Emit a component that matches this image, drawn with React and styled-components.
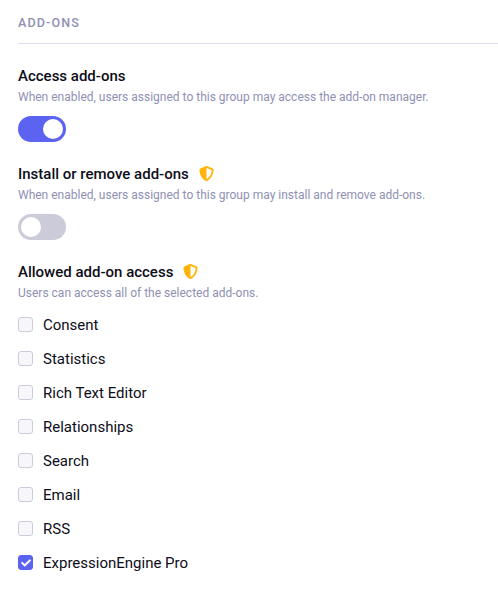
import React, { useState } from "react";
import styled, { createGlobalStyle } from "styled-components";
import { FaShieldAlt, FaCheck } from "react-icons/fa";

const GlobalStyle = createGlobalStyle`
  * { box-sizing: border-box; }
  body { margin: 0; background: #fff; font-family: Roboto, sans-serif; color: #0d0d19; }
`;

const Panel = styled.main`
  height: 602px;
  padding-left: 18px;
  overflow: hidden;
`;

const Heading = styled.h2`
  margin: 0;
  height: 44px;
  padding-top: 15px;
  border-bottom: 1px solid #dfe0ef;
  color: #8f90b4;
  font-size: 12.5px;
  line-height: 16px;
  font-weight: 500;
  letter-spacing: 1.15px;
  text-transform: uppercase;
`;

const Field = styled.section`
  padding-top: 22px;
`;

const Label = styled.h3`
  display: flex;
  align-items: center;
  gap: 10px;
  margin: 0;
  height: 21px;
  font-size: 15px;
  line-height: 21px;
  font-weight: 500;
`;

const Shield = styled(FaShieldAlt)`
  width: 15px;
  height: 15px;
  margin-bottom: 2px;
  color: #ffb40b;
`;

const Hint = styled.p`
  margin: 1px 0 0;
  height: 18px;
  font-size: 12px;
  line-height: 18px;
  color: #8f90b4;
`;

const Toggle = styled.button`
  display: flex;
  align-items: center;
  justify-content: ${(p) => (p.$on ? "flex-end" : "flex-start")};
  width: 48px;
  height: 26px;
  margin-top: 10px;
  padding: 3px;
  border: 0;
  border-radius: 13px;
  background: ${(p) => (p.$on ? "#5d63f1" : "#cbcbda")};
`;

const Knob = styled.span`
  width: 20px;
  height: 20px;
  border-radius: 50%;
  background: #fff;
`;

const Options = styled.div`
  display: grid;
  grid-auto-rows: 24px;
  row-gap: 10px;
  margin-top: 11px;
`;

const Option = styled.label`
  display: flex;
  align-items: center;
  gap: 10px;
  font-size: 15px;
  line-height: 24px;
`;

const Box = styled.button`
  display: grid;
  place-items: center;
  width: 15px;
  height: 15px;
  margin: 0 0 1px;
  padding: 0;
  border: 1px solid ${(p) => (p.$on ? "#5d63f1" : "#cbcbda")};
  border-radius: 3px;
  background: ${(p) => (p.$on ? "#5d63f1" : "#f7f7fb")};
`;

const Tick = styled(FaCheck)`
  width: 10px;
  height: 10px;
  color: #fff;
`;

const names = ["Consent", "Statistics", "Rich Text Editor", "Relationships", "Search", "Email", "RSS", "ExpressionEngine Pro"];

function Switch({ initial, label }) {
  const [on, setOn] = useState(initial);
  return <Toggle $on={on} role="switch" aria-checked={on} aria-label={label} onClick={() => setOn(!on)}><Knob /></Toggle>;
}

function Check({ name }) {
  const [on, setOn] = useState(name === "ExpressionEngine Pro");
  return (
    <Option>
      <Box $on={on} role="checkbox" aria-checked={on} aria-label={name} onClick={() => setOn(!on)}>
        {on && <Tick />}
      </Box>
      <span>{name}</span>
    </Option>
  );
}

export default function App() {
  return (
    <>
      <GlobalStyle />
      <Panel>
        <Heading>Add-ons</Heading>
        <Field>
          <Label>Access add-ons</Label>
          <Hint>When enabled, users assigned to this group may access the add-on manager.</Hint>
          <Switch initial label="Access add-ons" />
        </Field>
        <Field>
          <Label>Install or remove add-ons <Shield /></Label>
          <Hint>When enabled, users assigned to this group may install and remove add-ons.</Hint>
          <Switch initial={false} label="Install or remove add-ons" />
        </Field>
        <Field>
          <Label>Allowed add-on access <Shield /></Label>
          <Hint>Users can access all of the selected add-ons.</Hint>
          <Options>{names.map((name) => <Check key={name} name={name} />)}</Options>
        </Field>
      </Panel>
    </>
  );
}
